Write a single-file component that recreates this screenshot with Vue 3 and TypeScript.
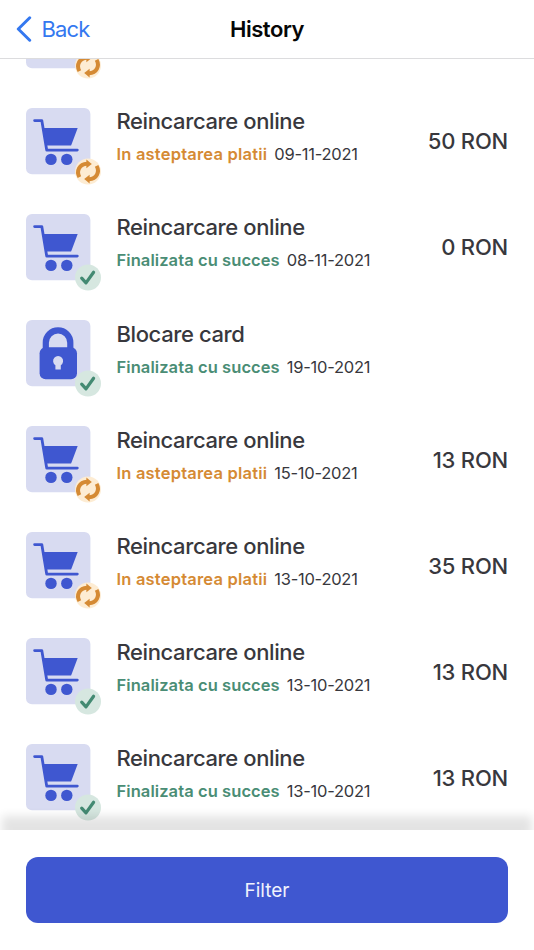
<script setup lang="ts">
type Entry = { title: string; icon: 'cart' | 'lock'; done: boolean; date: string; amount: string }

const entries: Entry[] = [
  { title: '', icon: 'cart', done: false, date: '', amount: '' },
  { title: 'Reincarcare online', icon: 'cart', done: false, date: '09-11-2021', amount: '50 RON' },
  { title: 'Reincarcare online', icon: 'cart', done: true, date: '08-11-2021', amount: '0 RON' },
  { title: 'Blocare card', icon: 'lock', done: true, date: '19-10-2021', amount: '' },
  { title: 'Reincarcare online', icon: 'cart', done: false, date: '15-10-2021', amount: '13 RON' },
  { title: 'Reincarcare online', icon: 'cart', done: false, date: '13-10-2021', amount: '35 RON' },
  { title: 'Reincarcare online', icon: 'cart', done: true, date: '13-10-2021', amount: '13 RON' },
  { title: 'Reincarcare online', icon: 'cart', done: true, date: '13-10-2021', amount: '13 RON' },
]
</script>

<template>
  <div class="screen">
    <header class="bar">
      <button class="back">
        <svg class="chevron" width="16" height="26" viewBox="0 0 16 26">
          <path d="M13.7 1.8 2.3 13l11.4 11.2" />
        </svg>
        <span>Back</span>
      </button>
      <h1>History</h1>
    </header>

    <main class="list">
      <article v-for="(e, i) in entries" :key="i" class="row">
        <svg class="icon" width="78" height="78" viewBox="0 0 78 78">
          <rect class="tile" width="64.4" height="66.3" rx="6" />
          <g v-if="e.icon === 'cart'">
            <path class="frame" d="M8.6 12.6h7.2l4.9 29.5h30.6" />
            <path class="solid" d="M17.3 20h34.4l-6.6 17.4H20z" />
            <circle class="solid" cx="25" cy="51.4" r="5.7" />
            <circle class="solid" cx="40.8" cy="51.4" r="5.7" />
          </g>
          <g v-else>
            <path class="shackle" d="M19.8 30v-7.3a12.25 12.25 0 0 1 24.5 0V30" />
            <rect class="solid" x="13.6" y="27.3" width="37.4" height="32" rx="6" />
            <path class="tile" d="M29.4 49.5v-4.3a5 5 0 1 1 5.4 0v4.3z" />
          </g>
          <g transform="translate(62 63.5)">
            <circle r="13" :class="e.done ? 'badge-done' : 'badge-wait'" />
            <path v-if="e.done" class="check" d="M-6.3.6-2 5.4 5.6-5.2" />
            <g v-else>
              <g v-for="turn in [0, 180]" :key="turn" :transform="`rotate(${turn})`">
                <path class="arc" d="M-8.6 5.6C-12-.5-8.6-7.5-1-7.7" />
                <path class="head" d="M-1.6-12 3.8-7.6-1.6-3.2z" />
              </g>
            </g>
          </g>
        </svg>
        <div class="info">
          <h2>{{ e.title }}</h2>
          <p v-if="e.title">
            <span :class="e.done ? 'done' : 'wait'">{{ e.done ? 'Finalizata cu succes' : 'In asteptarea platii' }}</span>
            <time>{{ e.date }}</time>
          </p>
        </div>
        <strong class="amount">{{ e.amount }}</strong>
      </article>
    </main>

    <footer class="actions">
      <button class="filter">Filter</button>
    </footer>
  </div>
</template>

<style>
body { background: #fff; }
</style>

<style scoped>
.screen {
  width: 534px;
  height: 950px;
  display: flex;
  flex-direction: column;
  overflow: hidden;
  background: #fff;
  font-family: Inter, "Liberation Sans", sans-serif;
  color: #38383d;
}
button { border: 0; margin: 0; font-family: inherit; }
h1, h2, p { margin: 0; }
.bar {
  height: 59px;
  flex: none;
  box-sizing: border-box;
  border-bottom: 1.5px solid #dcdcde;
  display: grid;
  grid-template-columns: 1fr auto 1fr;
  align-items: center;
}
.back {
  display: flex;
  align-items: center;
  gap: 9.5px;
  padding: 0 0 0 16px;
  background: none;
  color: #3478f0;
  font-size: 22px;
  letter-spacing: -0.85px;
}
.chevron { fill: none; stroke: #3478f0; stroke-width: 3; stroke-linecap: round; stroke-linejoin: round; }
h1 { font-size: 22px; font-weight: 600; letter-spacing: -0.45px; color: #060606; }
.list { flex: 1; min-height: 0; overflow: hidden; }
.row {
  height: 106.15px;
  display: flex;
  align-items: flex-start;
  padding: 0 26px;
}
.row:first-child { margin-top: -57.5px; }
.icon { flex: none; }
.tile { fill: #d8dbf1; }
.solid { fill: #3f57d0; }
.frame { fill: none; stroke: #3f57d0; stroke-width: 2.8; stroke-linecap: round; stroke-linejoin: round; }
.shackle { fill: none; stroke: #3f57d0; stroke-width: 6.2; }
.badge-done { fill: #d6e7e0; }
.badge-wait { fill: #fdecd3; }
.check { fill: none; stroke: #438a72; stroke-width: 3.2; stroke-linecap: round; stroke-linejoin: round; }
.arc { fill: none; stroke: #d58a34; stroke-width: 4; }
.head { fill: #d58a34; }
.info { flex: 1; padding-left: 12.5px; }
h2 { height: 28px; margin-top: -0.4px; font-size: 22px; line-height: 28px; font-weight: 540; letter-spacing: -0.39px; }
p { display: flex; gap: 7px; margin-top: 8px; font-size: 16.5px; line-height: 22px; white-space: nowrap; }
p span { font-weight: 600; }
.done { color: #4a8d75; letter-spacing: 0.08px; }
.wait { color: #d58a34; letter-spacing: 0.2px; }
time { letter-spacing: -0.25px; }
.amount { font-size: 22px; line-height: 28px; font-weight: 540; margin-top: 19.6px; letter-spacing: -0.2px; }
.actions {
  flex: none;
  height: 120px;
  box-sizing: border-box;
  padding: 27px 26px;
  background: #fff;
  position: relative;
  box-shadow: 0 -16px 9px -2px rgba(0, 0, 0, 0.11);
}
.filter {
  width: 100%;
  height: 66px;
  border-radius: 12px;
  background: #3f57d0;
  color: #f0f2fc;
  font-size: 19px;
}
</style>
